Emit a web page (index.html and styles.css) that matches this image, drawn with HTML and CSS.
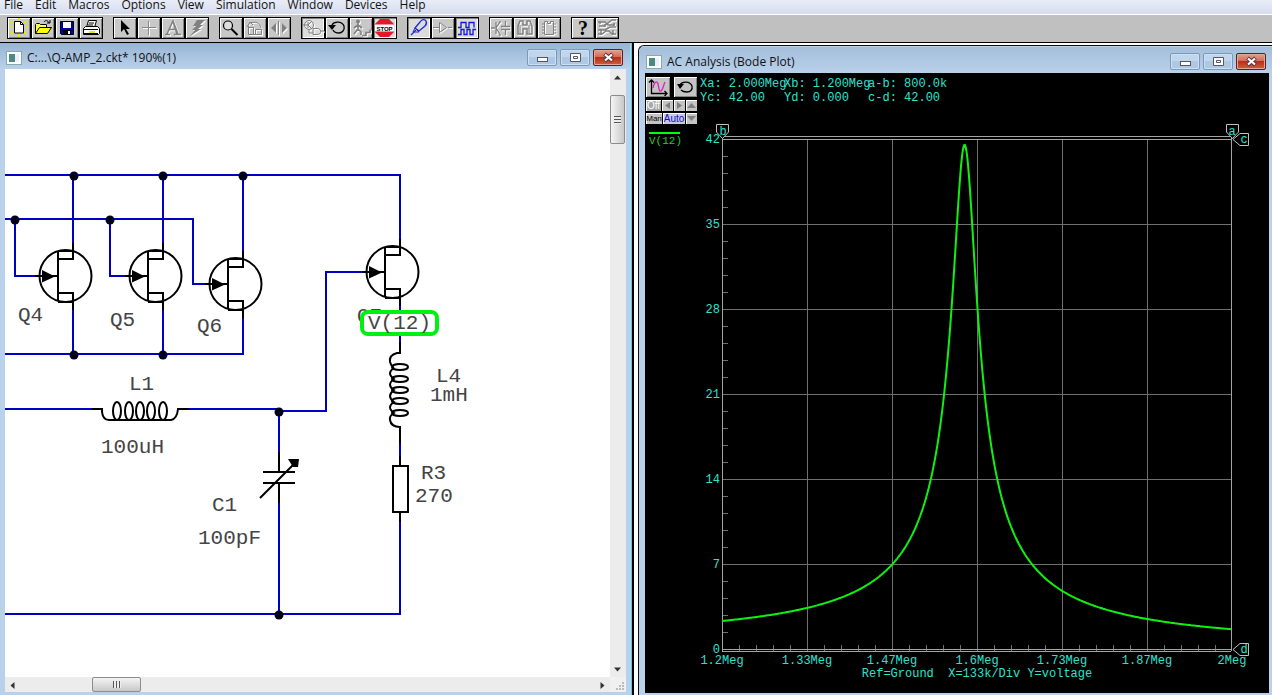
FILE: index.html
```html
<!DOCTYPE html>
<html lang="en">
<head>
<meta charset="utf-8">
<title>Circuit simulator</title>
<link rel="stylesheet" href="styles.css">
</head>
<body>
<nav class="menubar" aria-label="Main menu">
  <button>File</button><button>Edit</button><button>Macros</button><button>Options</button><button>View</button><button>Simulation</button><button>Window</button><button>Devices</button><button>Help</button>
</nav>

<div class="toolbar" role="toolbar" aria-label="Tools">
  <div class="group">
    <button aria-label="New"><svg viewBox="0 0 22 20"><path d="M3 3l2 2M2 9h2M3 16l2-2M11 0v2M11 16v3M18 3l-2 2M18 9h2M18 16l-2-2" stroke="#e8e800" stroke-width="2"/><path d="M6.500 3.500h6l3 3v8.500h-9z" fill="#fff" stroke="#000"/><path d="M12.500 3.500v3h3" fill="none" stroke="#000"/></svg></button>
    <button aria-label="Open"><svg viewBox="0 0 22 20"><path d="M3.500 15.500v-9l1-1h3l1 1h6v3" fill="#ffff60" stroke="#000"/><path d="M3.500 15.500l4-6h12l-4 6z" fill="#ff0" stroke="#000"/><path d="M12 4c1-2 4-2 5 1m1-3v3h-3" fill="none" stroke="#000"/></svg></button>
    <button aria-label="Save"><svg viewBox="0 0 22 20"><path d="M4.500 3.500h13v13h-12l-1-1z" fill="#00a" stroke="#000"/><path d="M7 4h8v6H7z" fill="#fff"/><path d="M7 12h8v4H7z" fill="#000"/><path d="M12 13h2v3h-2z" fill="#fff"/></svg></button>
    <button aria-label="Print"><svg viewBox="0 0 22 20"><path d="M6.500 9.500l2-7h8l-2 7z" fill="#fff" stroke="#000"/><path d="M9 5h5M8 7h5" stroke="#000"/><path d="M3.500 10.500l2-2h12l2 2v5l-1 1h-15z" fill="#fff" stroke="#000"/><path d="M4 11.500h14M4 15.500h14" stroke="#000"/><path d="M9 13h6v2H9z" fill="#ee0"/></svg></button>
  </div>
  <div class="group">
    <button aria-label="Select"><svg viewBox="0 0 22 20"><path d="M7 2v12l3-3 3 6 2-1-3-5h4z" fill="#000"/></svg></button>
    <button aria-label="Wire"><svg class="dim" viewBox="0 0 22 20"><path d="M10.500 3v14M4 9.500h14" fill="none" stroke="#888"/></svg></button>
    <button aria-label="Text"><svg class="dim" viewBox="0 0 22 20"><path d="M3 16.500h5M12 16.500h7M5 16l6-13 5 13M7 11.500h7M11 3l4 13" fill="none" stroke="#808080" stroke-width="1.500"/></svg></button>
    <button aria-label="Delete"><svg class="dim" viewBox="0 0 22 20"><path d="M11 2h8l-5 5h3l-5 4h3L4 18l5-6H6l4-4H7z" fill="#808080"/></svg></button>
  </div>
  <div class="group">
    <button aria-label="Zoom"><svg viewBox="0 0 22 20"><circle cx="8" cy="7.500" r="4.500" fill="#ddd" stroke="#000" stroke-width="1.200"/><path d="M11.500 11l6 6" stroke="#000" stroke-width="2"/></svg></button>
    <button aria-label="Rotate"><svg class="dim" viewBox="0 0 22 20"><path d="M4.500 8v8.500h13v-5h-6v5M4.500 9.500h5v7M3 9l3-5 3 3M6 5c6-2 10 0 11 5" fill="none" stroke="#808080"/></svg></button>
    <button aria-label="Mirror"><svg class="dim" viewBox="0 0 22 20"><path d="M10.500 3v14" stroke="#808080"/><path d="M8 5v10l-5-5zM14 5v10l5-5z" fill="#808080"/></svg></button>
  </div>
  <div class="group">
    <button class="down" aria-label="Mode"><svg class="dim" viewBox="0 0 22 20"><circle cx="7" cy="7" r="4.500" fill="none" stroke="#808080"/><path d="M1 7h5M6 4v6M6 7l4-4M6 7l4 4M11 10.500h4c5 0 5 6 0 6h-4zM7 12v3h4M18 13h4" fill="none" stroke="#808080"/></svg></button>
    <button aria-label="Reset"><svg viewBox="0 0 22 20"><path d="M6 7c2-4 10-4 12 1 1 4-2 7-5 7-3 0-5-1-6-3" fill="none" stroke="#000" stroke-width="1.300"/><path d="M2 7h8l-4 5z" fill="#000"/></svg></button>
    <button aria-label="Step"><svg class="dim" viewBox="0 0 22 20"><circle cx="8" cy="3.500" r="2" fill="#808080"/><path d="M8 5v6l3 3v3M8 11l-4 5M8 7l-4 3M8 7l4 3M12 17.500h4v-3h4v-3" fill="none" stroke="#808080" stroke-width="1.600"/></svg></button>
    <button class="down" aria-label="Stop"><svg viewBox="0 0 22 20"><path d="M6 1h9l5 5v8l-5 5H6l-5-5V6z" fill="#e01828"/><path d="M1 6.500h19v7H1z" fill="#fff"/><text class="stop" x="10.500" y="12.500" text-anchor="middle">STOP</text></svg></button>
  </div>
  <div class="group">
    <button class="down" aria-label="Probe"><svg viewBox="0 0 22 20"><path d="M3 17l5-5M7 10l5-6c2-3 5-3 6-1s1 3-1 5l-6 5z" fill="none" stroke="#2028d0" stroke-width="1.300"/><path d="M7 10l4 4H5z" fill="none" stroke="#2028d0"/></svg></button>
    <button aria-label="Gate"><svg class="dim" viewBox="0 0 22 20"><path d="M1 9.500h6M7.500 4.500v10l7-5zM16 9.500h4" fill="none" stroke="#808080"/></svg></button>
    <button class="down" aria-label="Waveforms"><svg viewBox="0 0 22 20"><path d="M2 9.500h3v-5h5v5h3v-5h5v5M2 16.500h3v-5h3v5h3v-5h3v5h3v-5h3" fill="none" stroke="#1018e0" stroke-width="1.300"/></svg></button>
  </div>
  <div class="group">
    <button aria-label="Parts"><svg class="dim" viewBox="0 0 22 20"><path d="M1 10h4M6 4v12M6 10l4-6M6 10l4 6M10 3v2M10 16v2M11 8.500h9M11 11.500h9M15.500 3v5M15.500 12v5" fill="none" stroke="#808080" stroke-width="1.300"/></svg></button>
    <button aria-label="Search"><svg class="dim" viewBox="0 0 22 20"><path d="M6 3h3v4h4V3h3l2 5v8h-5v-5H9v5H4V8z" fill="none" stroke="#808080" stroke-width="1.500"/><path d="M6 7v8M15 7v8" stroke="#808080"/></svg></button>
    <button aria-label="Chip"><svg class="dim" viewBox="0 0 22 20"><path d="M6.500 3.500h3v2h3v-2h3v13h-9zM4 6h2M4 9h2M4 12h2M4 15h2M16 6h2M16 9h2M16 12h2M16 15h2" fill="none" stroke="#808080"/></svg></button>
  </div>
  <div class="group">
    <button aria-label="Help"><span class="question">?</span></button>
    <button aria-label="Board"><svg class="dim" viewBox="0 0 22 20"><path d="M2 4h7l3 3h7M3 8h5l8-6h4M2 12h7l5-3h6M2 16h4l4-3h3l3 3h4M4 3v3M18 5v3M5 11v6M17 12v5M9 6v3" fill="none" stroke="#808080" stroke-width="1.500"/></svg></button>
  </div>
</div>

<main class="desk">
  <section class="window schematic">
    <header class="titlebar">
      <i class="appicon"></i><h1>C:...\Q-AMP_2.ckt* 190%(1)</h1>
      <div class="controls">
        <button aria-label="Minimize"><svg viewBox="0 0 13 11"><rect x="1.500" y="5.500" width="10" height="4" fill="#fff" stroke="#556"/></svg></button>
        <button aria-label="Maximize"><svg viewBox="0 0 13 11"><path d="M1.500 1.500h10v8h-10zM4.500 4.500h4v2h-4z" fill="#fff" stroke="#556"/></svg></button>
        <button class="close" aria-label="Close"><svg viewBox="0 0 13 11"><path d="M2.500 2l8 7M10.500 2l-8 7" stroke="#534" stroke-width="4"/><path d="M3 2.500l7 6M10 2.500l-7 6" stroke="#fff" stroke-width="2.200"/></svg></button>
      </div>
    </header>
    <div class="client">
      <svg class="canvas" role="img" aria-label="Amplifier schematic">
        <defs>
          <g id="jfet">
            <circle cx="26.500" cy="0" r="26"/>
            <path d="M-4 0h23M19 -24v49M34 -33v16H19M34 34v-17H19M19 -25h15M19 26h15"/>
            <path class="solid" d="M3 -6l13 6.500l-13 6z"/>
          </g>
        </defs>
        <g transform="translate(-5 -69)">
          <g class="wire">
            <path d="M5 175H400V240M5 219H193V284H205M15 219V276H36M110 219V276H126M73 175V244M163 175V244M243 175V252M5 354H243V316M73 309V354M163 309V354"/>
            <path d="M5 409H94M188 409H279V411H326V272H363M279 411V453M279 502V614M5 614H400V521M400 304V346M400 442V457"/>
          </g>
          <g class="dots">
            <circle cx="74" cy="176" r="4.500"/><circle cx="163" cy="176" r="4.500"/><circle cx="243" cy="176" r="4.500"/>
            <circle cx="15" cy="220" r="4.500"/><circle cx="110" cy="220" r="4.500"/>
            <circle cx="74" cy="355" r="4.500"/><circle cx="163" cy="355" r="4.500"/>
            <circle cx="279" cy="412" r="4.500"/><circle cx="279" cy="615" r="4.500"/>
          </g>
          <g class="part">
            <use href="#jfet" x="39" y="276"/><use href="#jfet" x="129" y="276"/><use href="#jfet" x="209" y="284"/><use href="#jfet" x="366" y="272"/>
            <path d="M92 409H102V412Q103 420 109 420H171Q177 419 178 409H189"/>
            <ellipse cx="117" cy="411" rx="4" ry="9"/><ellipse cx="129" cy="411" rx="4" ry="9"/><ellipse cx="140" cy="411" rx="4" ry="9"/><ellipse cx="151" cy="411" rx="4" ry="9"/><ellipse cx="163" cy="411" rx="4" ry="9"/>
            <path d="M400 342V353H397Q389 355 390 362Q391 366 394 368M394 368Q386 373 394 379Q386 385 394 390Q386 396 394 402Q386 407 394 413Q389 416 390 420Q391 427 400 427V443"/>
            <ellipse cx="400" cy="367" rx="8" ry="3"/><ellipse cx="400" cy="379" rx="8" ry="3"/><ellipse cx="400" cy="390" rx="8" ry="3"/><ellipse cx="400" cy="401" rx="8" ry="3"/><ellipse cx="400" cy="413" rx="8" ry="3"/>
            <path d="M400 456V466M400 512V522M393 466H408V512H393Z"/>
            <path d="M279 452V472M263 472H295M263 483H295M279 483V503M260 498L295 463"/>
            <path class="solid" d="M288 459h11l-1 8h-5z"/>
          </g>
          <g class="label">
            <text x="18" y="321">Q4</text><text x="110" y="326">Q5</text><text x="197" y="332">Q6</text><text x="357" y="322">Q7</text>
            <text x="129" y="390">L1</text><text x="101" y="453">100uH</text><text x="212" y="511">C1</text><text x="198" y="544">100pF</text>
            <text x="436" y="382">L4</text><text x="430" y="401">1mH</text><text x="421" y="479">R3</text><text x="415" y="502">270</text>
            <rect class="tag" x="362" y="312" width="75" height="22" rx="6"/>
            <text x="368" y="329">V(12)</text>
          </g>
        </g>
      </svg>
      <div class="scroll vertical">
        <button aria-label="Scroll up"><svg viewBox="0 0 7 4"><path d="M0 4l3.500-4L7 4z"/></svg></button>
        <button class="thumb" aria-label="Vertical position"><i></i></button>
        <button class="end" aria-label="Scroll down"><svg viewBox="0 0 7 4"><path d="M0 0l3.500 4L7 0z"/></svg></button>
      </div>
      <div class="scroll horizontal">
        <button aria-label="Scroll left"><svg viewBox="0 0 4 7"><path d="M4 0L0 3.500L4 7z"/></svg></button>
        <button class="thumb" aria-label="Horizontal position"><i></i></button>
        <button class="end" aria-label="Scroll right"><svg viewBox="0 0 4 7"><path d="M0 0l4 3.500L0 7z"/></svg></button>
      </div>
      <div class="grip"><svg viewBox="0 0 8 8"><path d="M6 0h2v2H6zM3 3h2v2H3zM6 3h2v2H6zM0 6h2v2H0zM3 6h2v2H3zM6 6h2v2H6z"/></svg></div>
    </div>
  </section>

  <section class="window analysis">
    <header class="titlebar">
      <i class="appicon"></i><h1>AC Analysis (Bode Plot)</h1>
      <div class="controls">
        <button aria-label="Minimize"><svg viewBox="0 0 13 11"><rect x="1.500" y="5.500" width="10" height="4" fill="#fff" stroke="#556"/></svg></button>
        <button aria-label="Maximize"><svg viewBox="0 0 13 11"><path d="M1.500 1.500h10v8h-10zM4.500 4.500h4v2h-4z" fill="#fff" stroke="#556"/></svg></button>
        <button class="close" aria-label="Close"><svg viewBox="0 0 13 11"><path d="M2.500 2l8 7M10.500 2l-8 7" stroke="#534" stroke-width="4"/><path d="M3 2.500l7 6M10 2.500l-7 6" stroke="#fff" stroke-width="2.200"/></svg></button>
      </div>
    </header>
    <div class="client">
      <div class="plothead">
        <div class="pad">
          <div class="padrow tall">
            <button aria-label="Axes"><svg viewBox="0 0 22 18"><path d="M4.500 2v13.500H20M2 4.500L4.500 2 7 4.500M17.500 13l2.500 2.500-2.500 2.500" fill="none" stroke="#000" stroke-width="1.300"/><path d="M6 10c1-6 4-8 5-4s1 8 3 7 2-5 4-9" fill="none" stroke="#e020c0" stroke-width="1.300"/></svg></button>
            <button aria-label="Redraw"><svg viewBox="0 0 22 18"><path d="M6 7c2-4 10-4 12 1 1 4-2 6-5 6-3 0-5-1-6-2" fill="none" stroke="#000" stroke-width="1.300"/><path d="M3 6h7l-4 5z" fill="#000"/></svg></button>
          </div>
          <div class="padrow">
            <button class="off">Off</button>
            <button class="arrow" aria-label="Left"><svg viewBox="0 0 9 9"><path d="M7 1v7L2 4.500z"/></svg></button>
            <button class="arrow" aria-label="Right"><svg viewBox="0 0 9 9"><path d="M2 1v7l5-3.500z"/></svg></button>
            <button class="arrow" aria-label="Up"><svg viewBox="0 0 9 9"><path d="M0 7h9L4.500 2z"/></svg></button>
          </div>
          <div class="padrow">
            <button class="man">Man</button>
            <button class="auto">Auto</button>
            <button class="arrow" aria-label="Down"><svg viewBox="0 0 9 9"><path d="M0 2h9L4.500 7z"/></svg></button>
          </div>
        </div>
        <div class="readout">
          <span>Xa: 2.000Meg</span><span>Xb: 1.200Meg</span><span>a-b: 800.0k</span>
          <span>Yc: 42.00</span><span>Yd: 0.000</span><span>c-d: 42.00</span>
        </div>
      </div>
      <svg class="canvas" role="img" aria-label="Voltage against frequency">
        <g transform="translate(-645 -124)">
          <path class="grid" d="M807.500 139V649M892.500 139V649M977.500 139V649M1062.500 139V649M1147.500 139V649M722 224.500H1231M722 309.500H1231M722 394.500H1231M722 479.500H1231M722 564.500H1231"/>
          <path class="grid" id="ticks"/>
          <path class="axis" d="M722.500 136V651M1231.500 136V651M722 136.500H1231M722 139.500H1231M722 649.500H1231M722 651.500H1231"/>
          <path class="curve" id="curve"/>
          <path class="trace" d="M649 133H680"/>
          <text class="tracename" x="649" y="144">V(12)</text>
          <path class="marker" d="M716.500 124.500H728.500V132L722.500 138.500L716.500 132Z"/>
          <path class="marker" d="M1226.500 124.500H1238.500V132L1232.500 138.500L1226.500 132Z"/>
          <path class="marker" d="M1248.500 133.500V145.500H1240L1233 139.500L1240 133.500Z"/>
          <path class="marker" d="M1248.500 643.500V655.500H1240L1233 649.500L1240 643.500Z"/>
          <g class="scale mid">
            <text x="723" y="135">b</text><text x="1232" y="135">a</text><text x="1244" y="143">c</text><text x="1244" y="653">d</text>
            <text x="722" y="664">1.2Meg</text><text x="807" y="664">1.33Meg</text><text x="892" y="664">1.47Meg</text><text x="977" y="664">1.6Meg</text><text x="1062" y="664">1.73Meg</text><text x="1147" y="664">1.87Meg</text><text x="1232" y="664">2Meg</text>
            <text x="977" y="677" xml:space="preserve">Ref=Ground  X=133k/Div Y=voltage</text>
          </g>
          <g class="scale right">
            <text x="720" y="143">42</text><text x="720" y="228">35</text><text x="720" y="313">28</text><text x="720" y="398">21</text><text x="720" y="483">14</text><text x="720" y="568">7</text><text x="720" y="653">0</text>
          </g>
        </g>
      </svg>
    </div>
  </section>
</main>
<script src="plot.js"></script>
</body>
</html>
```
FILE: styles.css
```css
* { box-sizing: border-box; }
body { margin: 0; height: 100vh; display: flex; flex-direction: column; overflow: hidden; background: #fff; font-family: "Noto Sans", "Open Sans", sans-serif; font-size: 12px; color: #111; }
button { margin: 0; padding: 0; border: 0; background: none; font: inherit; color: inherit; display: flex; align-items: center; justify-content: center; }

.menubar { display: flex; align-items: flex-end; gap: 12px; height: 14px; padding: 0 4px; background: linear-gradient(#e9edf8, #d6dcee); font-family: "Open Sans", sans-serif; flex: none; }
.menubar button { line-height: 18px; }

.toolbar { display: flex; gap: 10px; flex: none; padding: 2px 7px 3px; border-top: 1px solid #fff; border-bottom: 1px solid #000; background: #c0c0c0; }
.group { display: flex; }
.group button { width: 24px; height: 22px; border: 1px solid #000; background: #c8c8c8; box-shadow: inset 1px 1px #fff, inset -1px -1px #808080; }
.group .down { background: #dcdcdc; box-shadow: inset 1px 1px #808080, inset -1px -1px #fff; }
.group svg { width: 22px; height: 20px; }
.dim { filter: drop-shadow(1px 1px 0 #fff); }
.stop { font: bold 6px "Liberation Sans", sans-serif; }
.question { font: bold 20px "Liberation Serif", serif; line-height: 20px; color: #000; }

.desk { flex: 1; min-height: 0; display: flex; gap: 4px; }
.window { display: flex; flex-direction: column; min-width: 0; background: #b9d1ea; }
.schematic { flex: 632; padding: 0 6px 3px 5px; border-right: 2px solid #000; box-shadow: inset -1px 0 #58c8e8; }
.analysis { flex: 635; margin-top: 2px; padding: 1px 3px 2px 7px; border: 1px solid #111; border-width: 1px 0 0 1px; border-radius: 6px 0 0 0; }
.titlebar { display: flex; align-items: center; flex: none; height: 26px; padding: 3px 7px 0; margin: 0 -4px 0 -5px; background: linear-gradient(#98b4d4, #b9d1ea); }
.analysis { padding-left: 6px; }
.analysis .titlebar { margin: 0 -3px 0 -6px; padding: 3px 6px 0 8px; background: linear-gradient(#a4bedb, #b9d1ea); border-top-left-radius: 5px; }
.titlebar h1 { flex: 1; margin: 0 0 0 6px; font: 12px "Open Sans", sans-serif; white-space: nowrap; }
.appicon { width: 14px; height: 12px; border: 2px solid #fff; background: linear-gradient(90deg, #4c8c80 60%, #eef 60%); box-shadow: 0 0 0 1px #8aa; }
.controls { display: flex; gap: 3px; }
.controls button { width: 30px; height: 17px; border: 1px solid #7c98b8; border-radius: 2px; background: linear-gradient(#c0d6ec 50%, #aec8e4 50%); box-shadow: inset 0 0 0 1px #cce0f2; }
.controls .close { border-color: #5c2020; background: linear-gradient(#e0a090, #cf6a54 50%, #b83018 50%, #d0603c); box-shadow: inset 0 0 0 1px #e0a898; }
.controls svg { width: 13px; height: 11px; }

.schematic .client { flex: 1; min-height: 0; display: grid; grid-template: 1fr 15px / 1fr 16px; background: #fff; }
.canvas { display: block; width: 100%; height: 100%; min-width: 0; min-height: 0; overflow: hidden; }
.wire { fill: none; stroke: #0000c4; stroke-width: 2; shape-rendering: crispEdges; }
.dots circle { fill: #000018; }
.part { fill: none; stroke: #000; stroke-width: 2; }
.solid { fill: #000; stroke: none; }
.label { font: 21px "Liberation Mono", monospace; fill: #444; }
.tag { fill: #fff; stroke: #00f010; stroke-width: 4; }

.scroll { display: flex; background: #ececec; }
.scroll button { width: 15px; height: 16px; flex: none; }
.scroll svg { width: 7px; height: 7px; fill: #333; }
.scroll .end { margin-left: auto; }
.vertical { flex-direction: column; }
.vertical .end { margin: auto 0 0; }
.scroll .thumb { border: 1px solid #8c8c8c; border-radius: 2px; }
.vertical .thumb { height: 49px; margin-top: 10px; background: linear-gradient(90deg, #f4f4f4, #c8c8c8); }
.horizontal .thumb { width: 49px; height: 15px; margin-left: 72px; background: linear-gradient(#f4f4f4, #c8c8c8); }
.vertical i { width: 7px; height: 8px; background: repeating-linear-gradient(#555 0 1px, #eee 1px 3px); }
.horizontal i { width: 8px; height: 7px; background: repeating-linear-gradient(90deg, #555 0 1px, #eee 1px 3px); }
.grip { display: flex; align-items: flex-end; justify-content: flex-end; padding: 2px; background: #f0f0f0; }
.grip svg { width: 8px; height: 8px; fill: #bbb; }

.analysis .client { flex: 1; min-height: 0; display: flex; flex-direction: column; background: #000; }
.plothead { display: flex; gap: 3px; height: 51px; flex: none; padding: 4px 0 0 1px; }
.pad { display: flex; flex-direction: column; gap: 2px; width: 51px; }
.padrow { display: flex; gap: 1px; height: 11px; }
.padrow.tall { height: 20px; gap: 4px; margin-bottom: 1px; }
.padrow button { background: #c4c4c4; box-shadow: inset 1px 1px #fff; height: 11px; font: 10px "Liberation Sans", sans-serif; line-height: 11px; }
.padrow.tall button { width: 24px; height: 20px; box-shadow: inset 1px 1px #fff, inset -1px -1px #808080; }
.padrow.tall svg { width: 22px; height: 18px; }
.padrow .off { width: 15px; color: #fff; background: #a8a8a8; }
.padrow .man { width: 16px; font-size: 8px; color: #000; }
.padrow .auto { width: 22px; color: #1010c8; background: #c8c8e0; }
.padrow .arrow { width: 11px; }
.arrow svg { width: 9px; height: 9px; fill: #808080; }
.readout { display: grid; grid-template-columns: repeat(3, 84px); align-content: start; font: 12px "Liberation Mono", monospace; line-height: 14px; color: #30e0d0; white-space: nowrap; }
.grid { fill: none; stroke: #707070; }
.axis { fill: none; stroke: #a4a4a4; }
.curve { fill: none; stroke: #10f010; stroke-width: 2; }
.trace { stroke: #00ff00; stroke-width: 2; }
.marker { fill: #000; stroke: #c0c0c0; }
.scale { font: 12px "Liberation Mono", monospace; fill: #30e0d0; }
.mid { text-anchor: middle; }
.right { text-anchor: end; }
.tracename { font: 11px "Liberation Mono", monospace; fill: #20d020; }
```
FILE: plot.js
```js
// Plot area and axis ranges
const left = 722, width = 509, bottom = 649, unit = 510 / 42;
const f0 = 1.5815, gain = 0.98, damping = 0.0236;

let curve = '';
for (let px = 0; px <= width; px += 1) {
  const u = (1.2 + 0.8 * px / width) / f0;
  const v = gain / Math.hypot(1 - u * u, damping * u);
  curve += (px ? 'L' : 'M') + (left + px) + ' ' + (bottom - v * unit).toFixed(1);
}
document.getElementById('curve').setAttribute('d', curve);

let ticks = '';
for (let i = 1; i < 30; i += 1) {
  ticks += `M${left + 17 * i + 0.5} 645V652M${left} ${bottom - 17 * i + 0.5}h6`;
}
document.getElementById('ticks').setAttribute('d', ticks);
```
